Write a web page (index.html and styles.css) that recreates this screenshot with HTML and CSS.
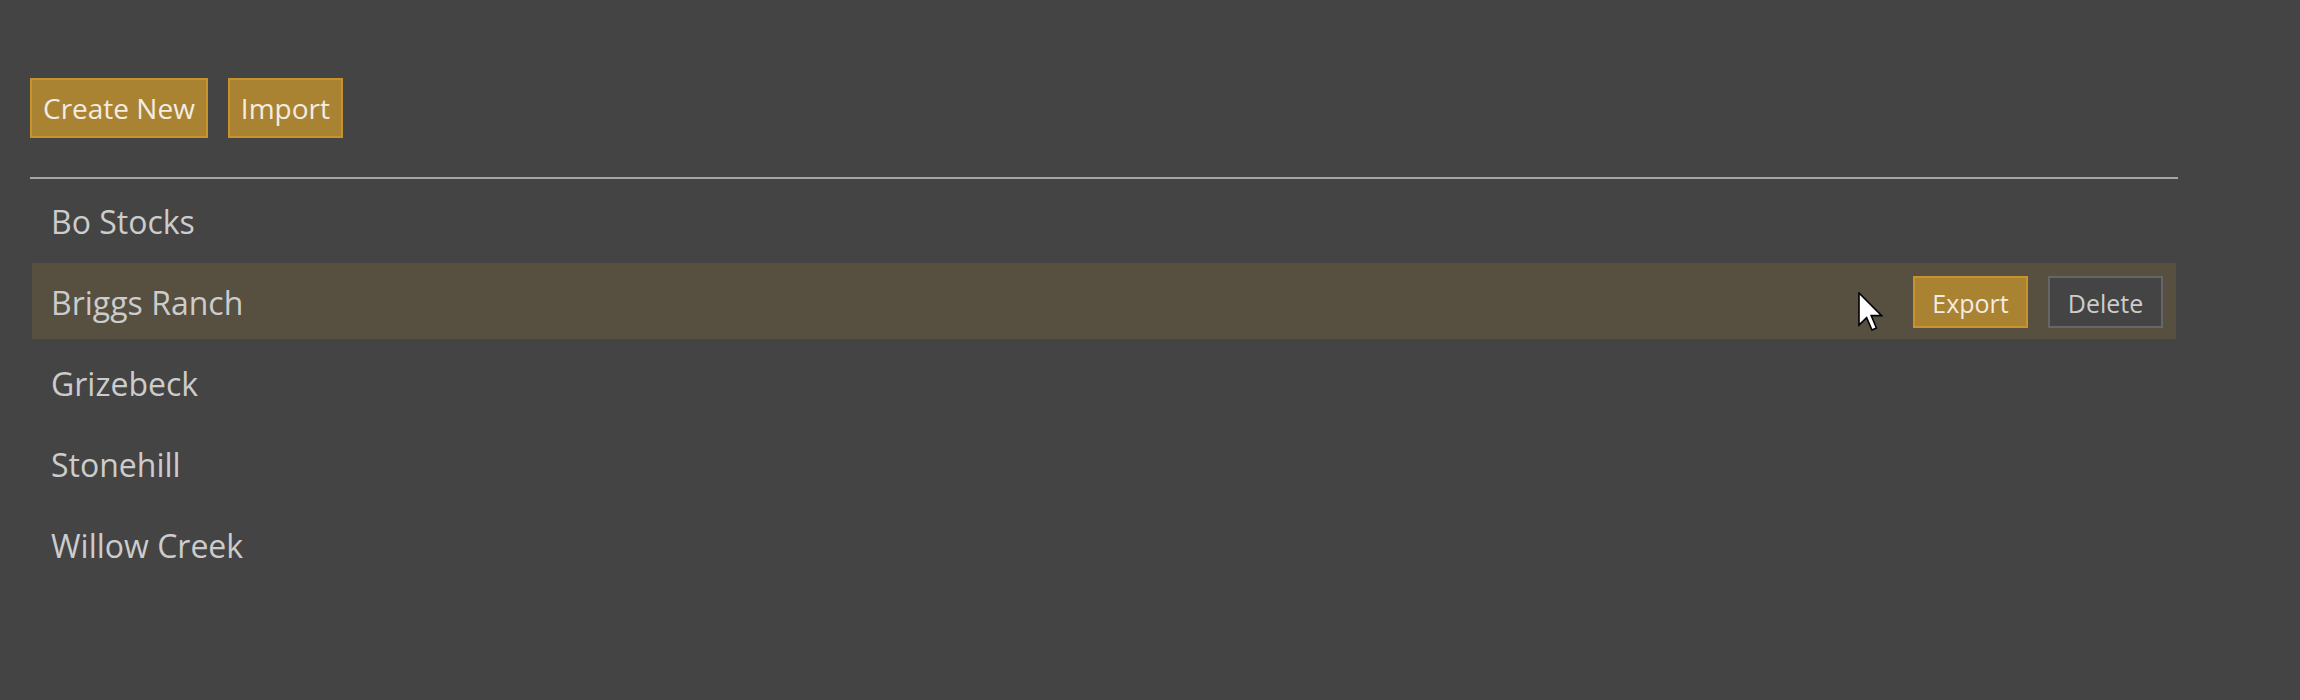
FILE: index.html
```html
<!DOCTYPE html>
<html lang="en">
<head>
<meta charset="utf-8">
<title>Ranches</title>
<link rel="stylesheet" href="styles.css">
</head>
<body>
<main class="page">
  <div class="toolbar">
    <button class="btn btn-gold btn-lg">Create New</button>
    <button class="btn btn-gold btn-lg">Import</button>
  </div>
  <ul class="list">
    <li class="row"><span class="name">Bo Stocks</span></li>
    <li class="row row-active">
      <span class="name">Briggs Ranch</span>
      <span class="actions">
        <button class="btn btn-gold btn-sm">Export</button>
        <button class="btn btn-dark btn-sm">Delete</button>
      </span>
    </li>
    <li class="row"><span class="name">Grizebeck</span></li>
    <li class="row"><span class="name">Stonehill</span></li>
    <li class="row"><span class="name">Willow Creek</span></li>
  </ul>
</main>
<svg class="cursor" width="26" height="40" viewBox="0 0 13 20">
  <path d="M0.5 0.5 L0.5 16.5 L4.3 12.8 L7 19 L9.2 18 L6.6 11.8 L11.8 11.8 Z" fill="#fff" stroke="#000" stroke-width="0.8" stroke-linejoin="miter"/>
</svg>
</body>
</html>
```

FILE: styles.css
```css
html, body {
  margin: 0;
  padding: 0;
  background: #444444;
}
body {
  font-family: "Open Sans", "Noto Sans", sans-serif;
  color: #cfcfcf;
  position: relative;
  min-height: 700px;
}
.page {
  padding: 78px 0 0 30px;
  width: 2148px;
}
.toolbar {
  display: flex;
  gap: 20px;
  margin-bottom: 39px;
}
.btn {
  box-sizing: border-box;
  display: inline-flex;
  align-items: center;
  justify-content: center;
  font-family: "Open Sans", "Noto Sans", sans-serif;
  border-width: 2px;
  border-style: solid;
  margin: 0;
  cursor: default;
}
.btn-gold {
  background: #a98232;
  border-color: #c8922c;
  color: #f2ece2;
}
.btn-dark {
  background: #444444;
  border-color: #666666;
  color: #cccccc;
}
.btn-lg {
  height: 60px;
  padding: 0 11px;
  font-size: 28px;
}
.btn-sm {
  height: 52px;
  width: 115px;
  padding: 1px 0 0;
  font-size: 25px;
}
.list {
  list-style: none;
  margin: 0;
  padding: 3px 0 0;
  border-top: 2px solid #a6a6a6;
  display: flex;
  flex-direction: column;
  gap: 5px;
}
.row {
  box-sizing: border-box;
  height: 76px;
  margin-left: 2px;
  width: 2144px;
  padding: 2px 13px 0 19px;
  display: flex;
  align-items: center;
  justify-content: space-between;
}
.row-active {
  background: #575041;
}
.name {
  font-size: 32px;
  color: #cccccc;
}
.actions {
  display: flex;
  gap: 20px;
}
.cursor {
  position: absolute;
  left: 1858px;
  top: 292px;
}
```
